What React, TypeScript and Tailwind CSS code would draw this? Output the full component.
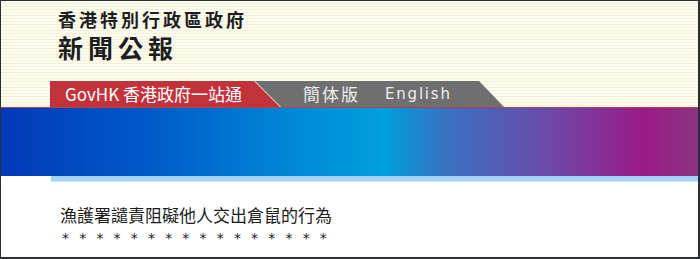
const stars = Array.from({ length: 16 });

export default function App() {
  return (
    <div className="w-[700px] h-[259px] bg-white border-l border-t border-r-2 border-b-2 border-[#2b3035] overflow-hidden flex flex-col font-['Noto_Sans_CJK_TC',sans-serif]">
      {/* header */}
      <div className="h-[107px] shrink-0 flex flex-col bg-[repeating-linear-gradient(to_bottom,#fcfcef_0px,#fcfcef_2px,#f1f1da_2px,#f1f1da_3px)] border-b border-[#b8404c]">
        <div className="pl-[57px] pt-[7px] text-[#1e1e1e]">
          <div className="text-[18px] leading-[22px] font-bold tracking-[3px]">香港特別行政區政府</div>
          <div className="text-[25px] leading-[30px] font-bold tracking-[5px] mt-[2px]">新聞公報</div>
        </div>
        <div className="mt-auto flex h-[26px] pl-[49px]">
          <div className="w-[230px] h-full bg-[#c1323b] text-white text-[17px] leading-[26px] pl-[15px] [clip-path:polygon(0_0,204px_0,230px_100%,0_100%)]">
            GovHK 香港政府一站通
          </div>
          <div className="-ml-[25px] w-[249px] h-full bg-[#6f6f6f] text-[#eeeeee] leading-[26px] flex [clip-path:polygon(0_0,224px_0,249px_100%,26px_100%)]">
            <span className="ml-[48px] text-[17px] tracking-[2px]">簡体版</span>
            <span className="ml-[25px] tracking-[1.8px] font-['DejaVu_Sans',sans-serif] text-[15px]">English</span>
          </div>
        </div>
      </div>
      {/* colour band */}
      <div className="h-[68px] shrink-0 bg-[linear-gradient(to_right,#0239b8_0%,#0058c8_20%,#0088d6_42%,#009fdd_55%,#3a70c0_64%,#6c48a8_79%,#9a1b87_92%,#8b3382_100%)]" />
      <div className="ml-[50px] h-[6px] shrink-0 bg-[#a5d3f6] border-b border-[#c8e4fa]" />
      {/* body */}
      <div className="pl-[59px] pt-[22px] text-[#1c1c1c]">
        <div className="text-[17px] leading-[22px]">漁護署譴責阻礙他人交出倉鼠的行為</div>
        <div className="flex ml-[2px] mt-[5px] text-[14px] leading-[14px] font-['DejaVu_Sans',sans-serif]">
          {stars.map((_, i) => (
            <span key={i} className="w-[17.2px] shrink-0">*</span>
          ))}
        </div>
      </div>
    </div>
  );
}
